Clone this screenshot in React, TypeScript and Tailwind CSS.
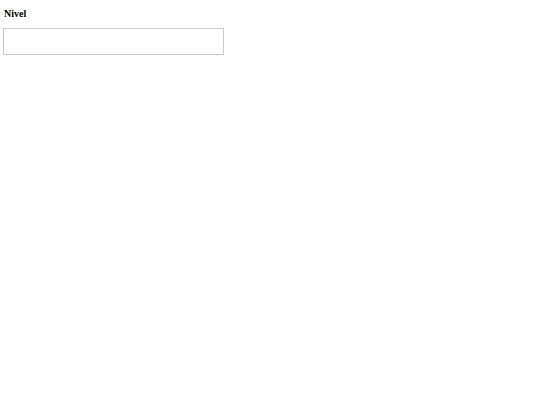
import React from 'react';

export default function App() {
  return (
    <div className="min-h-screen bg-white px-[3px] pt-[8px] font-['Liberation_Serif',serif] text-black">
      <label htmlFor="nivel" className="block pl-px text-[10px] font-bold leading-[12px]">
        Nivel
      </label>
      <input
        id="nivel"
        type="text"
        className="mt-[8px] block h-[27px] w-[221px] border border-[#cccccc] bg-white px-1 text-[12px] outline-none"
      />
    </div>
  );
}
